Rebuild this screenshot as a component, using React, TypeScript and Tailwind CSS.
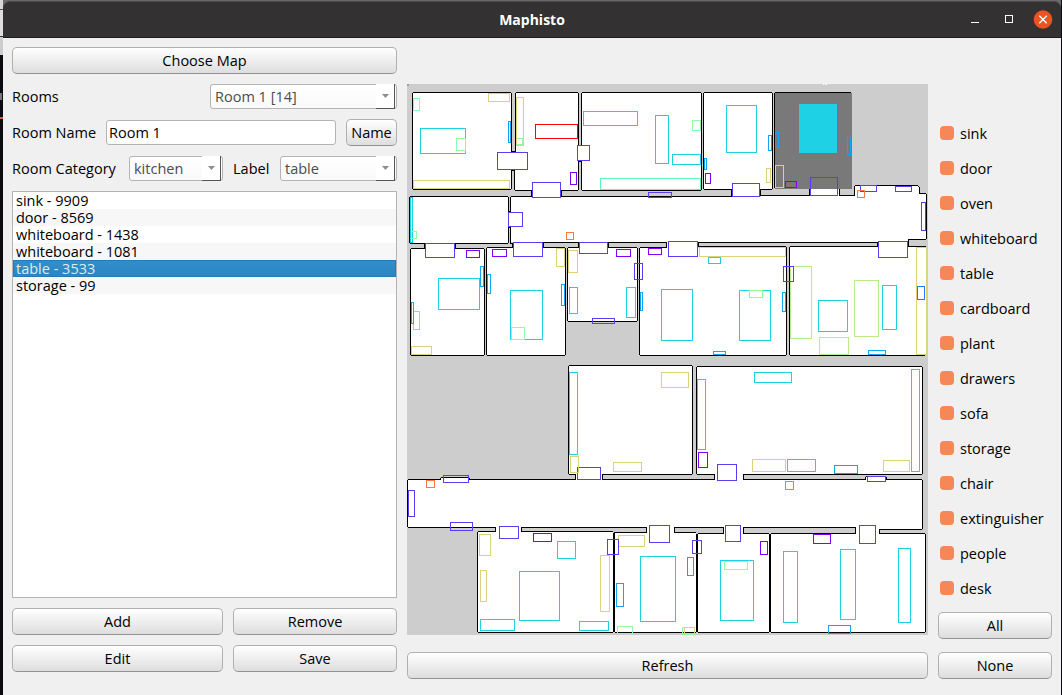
import React from "react";

type Box = [number, number, number, number];

const rooms: Box[] = [
  [413, 93, 98, 96], [511, 152, 5, 18], [516, 93, 62, 97], [515, 170, 10, 20], [532, 189, 29, 9], [577, 145, 13, 16],
  [582, 93, 119, 97], [704, 93, 68, 96], [732, 189, 28, 8], [810, 188, 29, 9],
  [410, 197, 98, 46], [508, 212, 3, 15], [511, 197, 397, 45], [908, 197, 18, 42], [761, 196, 165, 4], [855, 186, 64, 12], [918, 194, 8, 6],
  [425, 242, 30, 8], [513, 242, 30, 8], [579, 242, 29, 8], [667, 242, 31, 8], [878, 240, 30, 8],
  [411, 249, 73, 106], [487, 248, 78, 107], [568, 248, 69, 73], [640, 248, 146, 107], [790, 247, 137, 108],
  [569, 366, 123, 108], [697, 367, 225, 107], [576, 473, 26, 7], [715, 473, 28, 7],
  [408, 480, 514, 47], [441, 478, 28, 3], [866, 477, 20, 4], [879, 520, 43, 9], [856, 520, 23, 9],
  [496, 526, 25, 8], [647, 526, 27, 8], [724, 526, 19, 8], [856, 526, 23, 8],
  [478, 532, 135, 100], [615, 533, 81, 99], [698, 534, 71, 98], [771, 534, 154, 98],
];

// Horizontal walls: x, y, length
const hWalls: [number, number, number][] = [
  [413, 92, 98], [516, 92, 62], [582, 92, 119], [704, 92, 68], [775, 92, 76],
  [511, 151, 5], [511, 170, 4], [578, 161, 4], [413, 189, 98], [515, 190, 17], [561, 190, 17], [582, 190, 119], [704, 189, 28], [760, 189, 12],
  [410, 196, 98], [511, 196, 21], [561, 196, 171], [760, 195, 50], [839, 195, 16], [855, 185, 63], [919, 193, 7],
  [508, 211, 3], [508, 227, 3],
  [410, 243, 15], [455, 243, 53], [510, 243, 3], [411, 248, 14], [455, 248, 29], [487, 247, 26],
  [543, 242, 36], [543, 247, 22], [568, 247, 11], [608, 242, 59], [608, 247, 29], [640, 247, 27],
  [698, 242, 180], [698, 246, 88], [790, 246, 88], [908, 239, 18], [908, 246, 18],
  [411, 355, 73], [487, 355, 78], [568, 321, 69], [640, 355, 146], [790, 355, 135],
  [569, 365, 123], [697, 366, 225], [569, 474, 7], [602, 474, 90], [697, 474, 18], [743, 474, 179],
  [408, 479, 33], [469, 479, 107], [441, 477, 28], [602, 479, 113], [743, 479, 123], [866, 476, 20], [886, 479, 36],
  [408, 527, 88], [478, 531, 18], [521, 527, 126], [521, 531, 92], [614, 532, 33],
  [674, 527, 50], [674, 532, 22], [698, 533, 26], [743, 527, 113], [743, 533, 26], [771, 533, 85], [879, 529, 43], [879, 533, 46],
  [478, 632, 135], [615, 632, 81], [698, 632, 71], [771, 632, 154],
];

// Vertical walls: x, y, length
const vWalls: [number, number, number][] = [
  [412, 93, 96], [511, 93, 59], [515, 93, 59], [511, 170, 19], [514, 170, 20], [578, 93, 52], [581, 93, 52], [578, 161, 29], [581, 161, 29],
  [531, 190, 7], [561, 190, 7], [701, 93, 97], [703, 93, 96], [772, 93, 96], [774, 93, 95], [731, 189, 8], [760, 189, 7],
  [809, 189, 7], [839, 189, 7], [854, 186, 10], [918, 186, 1], [919, 187, 7], [926, 194, 45],
  [409, 197, 46], [508, 197, 15], [510, 197, 15], [508, 227, 16], [510, 227, 17], [512, 243, 5],
  [424, 243, 6], [455, 243, 6], [512, 243, 5], [543, 242, 6], [578, 242, 6], [608, 242, 6], [666, 242, 6], [698, 242, 5], [877, 242, 5], [908, 239, 8],
  [410, 249, 106], [484, 249, 106], [486, 248, 107], [565, 248, 107], [567, 248, 73], [637, 248, 73], [639, 248, 107], [786, 247, 108], [789, 247, 108],
  [568, 366, 108], [692, 366, 108], [696, 367, 107], [922, 367, 107], [575, 474, 6], [602, 474, 6], [714, 474, 6], [743, 474, 6],
  [440, 478, 2], [469, 478, 2], [865, 477, 3], [886, 477, 3], [407, 480, 47], [922, 480, 49],
  [495, 527, 5], [521, 527, 5], [646, 527, 6], [674, 527, 6], [723, 527, 7], [743, 527, 7], [855, 527, 7], [879, 529, 5],
  [477, 532, 100], [613, 533, 99], [614, 533, 99], [696, 534, 98], [697, 534, 98], [769, 534, 98], [770, 534, 98], [925, 534, 98],
];

const objects: { color: string; boxes: Box[] }[] = [
  { color: "#60f5b8", boxes: [[600, 178, 101, 12], [413, 311, 7, 19]] },
  { color: "#b8ec86", boxes: [[790, 266, 22, 73], [854, 280, 25, 57], [819, 337, 30, 18]] },
  {
    color: "#1fd0e0",
    boxes: [
      [420, 128, 46, 26], [583, 111, 55, 15], [655, 115, 14, 49], [672, 154, 29, 11], [726, 105, 31, 48], [410, 197, 3, 46],
      [438, 278, 42, 32], [510, 290, 33, 50], [569, 287, 9, 27], [626, 287, 10, 31], [661, 289, 32, 52], [708, 257, 13, 7],
      [739, 290, 32, 51], [818, 300, 30, 32], [882, 285, 15, 45], [569, 372, 9, 83], [697, 379, 9, 71], [754, 372, 38, 11],
      [787, 459, 29, 13], [911, 369, 9, 103], [557, 541, 19, 18], [519, 571, 41, 50], [640, 556, 36, 66], [480, 619, 35, 12],
      [579, 621, 30, 10], [720, 560, 34, 61], [783, 551, 15, 72], [840, 549, 16, 71], [898, 548, 13, 75],
    ],
  },
  {
    color: "#90faa4",
    boxes: [
      [413, 98, 7, 13], [456, 138, 10, 13], [516, 138, 7, 7], [692, 120, 9, 11], [411, 231, 6, 8], [511, 327, 14, 13],
      [749, 290, 14, 8], [617, 626, 16, 8], [724, 561, 24, 9], [682, 627, 13, 8],
    ],
  },
  {
    color: "#e0d077",
    boxes: [
      [488, 93, 22, 9], [413, 180, 97, 9], [516, 97, 8, 49], [766, 168, 5, 15], [775, 165, 9, 23], [556, 248, 9, 19],
      [568, 250, 10, 23], [411, 346, 21, 9], [699, 247, 87, 10], [916, 247, 11, 108], [661, 372, 28, 16],
      [613, 462, 29, 10], [752, 459, 34, 13], [883, 460, 27, 12], [479, 534, 12, 22], [480, 570, 7, 32], [600, 555, 10, 57],
      [618, 535, 27, 12], [684, 627, 11, 7],
    ],
  },
  {
    color: "#12a7ec",
    boxes: [
      [508, 121, 3, 22], [704, 158, 3, 12], [768, 135, 4, 16], [775, 132, 4, 16], [847, 137, 4, 18], [480, 266, 4, 21],
      [487, 274, 4, 20], [411, 302, 3, 22], [561, 284, 4, 22], [640, 292, 3, 19], [782, 292, 4, 20], [713, 351, 13, 4],
      [868, 350, 18, 5], [834, 465, 24, 9], [616, 583, 8, 24], [687, 557, 7, 19], [828, 625, 23, 9],
    ],
  },
  { color: "#2878f0", boxes: [[917, 286, 8, 14]] },
  { color: "#ff0000", boxes: [[535, 124, 43, 15]] },
  {
    color: "#8000ff",
    boxes: [
      [570, 172, 7, 13], [705, 173, 6, 11], [785, 181, 12, 7], [466, 250, 14, 8], [492, 249, 15, 8], [616, 249, 15, 8],
      [648, 248, 14, 7], [698, 452, 10, 16], [533, 533, 19, 9], [760, 541, 8, 14], [813, 534, 18, 10],
    ],
  },
  {
    color: "#5a3cf4",
    boxes: [
      [497, 152, 31, 18], [577, 145, 13, 16], [532, 182, 29, 16], [648, 192, 24, 6], [508, 212, 15, 15], [732, 183, 28, 14],
      [810, 177, 28, 19], [860, 185, 17, 7], [895, 186, 17, 6], [921, 202, 5, 29], [425, 243, 30, 15], [513, 242, 30, 15],
      [579, 242, 29, 12], [634, 263, 9, 17], [668, 241, 30, 16], [592, 318, 23, 6], [783, 266, 11, 16], [878, 241, 30, 17],
      [577, 467, 24, 13], [717, 464, 20, 17], [867, 476, 19, 6], [443, 475, 26, 8], [408, 490, 7, 27], [450, 522, 23, 9],
      [499, 526, 20, 13], [607, 539, 12, 16], [649, 525, 21, 18], [692, 540, 10, 14], [725, 525, 16, 17], [859, 525, 17, 19],
    ],
  },
  { color: "#e0d077", boxes: [[570, 456, 9, 17]] },
  { color: "#ff7842", boxes: [[857, 190, 8, 8], [566, 232, 8, 8], [785, 481, 9, 9], [426, 480, 9, 8]] },
];

function FloorMap() {
  return (
    <svg className="block h-[551px] w-[521px]" viewBox="407 84 521 551" shapeRendering="crispEdges">
      <rect x="407" y="84" width="521" height="551" fill="#cdcdcd" />
      <rect x="407" y="84" width="2" height="2" fill="#a0a0a0" />
      <path d="M823 84h1v1h-1zM825 84h2v1h-2z" fill="#fff" />
      {rooms.map(([x, y, w, h], i) => (
        <rect key={i} x={x} y={y} width={w} height={h} fill="#fff" />
      ))}
      {hWalls.map(([x, y, n], i) => (
        <rect key={i} x={x} y={y} width={n} height="1" fill="#000" />
      ))}
      {vWalls.map(([x, y, n], i) => (
        <rect key={i} x={x} y={y} width="1" height={n} fill="#000" />
      ))}
      <rect x="775" y="93" width="77" height="96" fill="#797979" />
      <rect x="799" y="104" width="38" height="49" fill="#1fd1e4" />
      {objects.map((group, g) => (
        <g key={g} fill="none" stroke={group.color}>
          {group.boxes.map(([x, y, w, h], i) => (
            <rect key={i} x={x + 0.5} y={y + 0.5} width={w - 1} height={h - 1} />
          ))}
        </g>
      ))}
    </svg>
  );
}

function Button({ children, className = "" }: { children: React.ReactNode; className?: string }) {
  return (
    <button
      className={
        "flex h-[27px] items-center justify-center rounded-[5px] border border-[#b0b0b0] border-b-[#929292] bg-linear-to-b from-white to-[#dedede] pt-px text-black " +
        className
      }
    >
      {children}
    </button>
  );
}

function Combo({ children, className = "" }: { children: React.ReactNode; className?: string }) {
  return (
    <div
      className={
        "flex h-[25px] items-stretch rounded-[3px] border border-[#b4b4b4] bg-linear-to-b from-white to-[#f9f9f9] text-[#4c4c4c] " +
        className
      }
    >
      <span className="flex flex-1 items-center pt-0.5 pl-1">{children}</span>
      <span className="-mt-px -mb-px mr-px flex w-[19px] items-center justify-center border-r border-b border-[#555] bg-white">
        <svg className="h-1 w-[7px]" viewBox="0 0 7 4">
          <path d="M0 0h7L3.5 4z" fill="#8e8c88" />
        </svg>
      </span>
    </div>
  );
}

const items = ["sink - 9909", "door - 8569", "whiteboard - 1438", "whiteboard - 1081", "table - 3533", "storage - 99"];

const labels = [
  "sink", "door", "oven", "whiteboard", "table", "cardboard", "plant",
  "drawers", "sofa", "storage", "chair", "extinguisher", "people", "desk",
];

export default function App() {
  return (
    <div className="flex h-[695px] w-[1062px] overflow-hidden bg-[#0b0c12] font-['Open_Sans','Noto_Sans',sans-serif] text-[14.5px] leading-none whitespace-nowrap text-black">
      <div className="flex w-[3px] flex-col">
        <div className="h-[9px] bg-[#d8d8d8]" />
        <div className="h-px bg-[#555]" />
        <div className="h-[26px] bg-[#dedede]" />
        <div className="h-px bg-[#333]" />
        <div className="h-[18px] bg-[#cccccc]" />
        <div className="mt-[38px] h-[7px] w-[2px] bg-[#777]" />
        <div className="mt-[17px] h-[2px] bg-[#c8614a]" />
      </div>
      <div className="flex w-[1058px] flex-col bg-[#686868]">
        <header className="mt-px flex h-[37px] items-center rounded-t-[7px] border-t border-b border-t-[#4b4a49] border-b-[#1f1e1e] bg-[#333131] text-white">
          <div className="w-[99px]" />
          <h1 className="flex-1 text-center text-[14px] font-bold">Maphisto</h1>
          <div className="flex w-[99px] items-center">
            <svg className="h-7 w-[99px]" viewBox="0 0 99 28">
              <path d="M9 16.5h8" stroke="#fff" />
              <rect x="43.5" y="9.5" width="7" height="7" fill="none" stroke="#fff" />
              <circle cx="81" cy="13.5" r="9.3" fill="#e95420" />
              <path d="M77.3 9.8l7.4 7.4M84.7 9.8l-7.4 7.4" stroke="#fff" strokeWidth="1.4" />
            </svg>
          </div>
        </header>

        <main className="flex flex-1 bg-[#f0f0f0] pt-[9px] pl-[9px]">
          <section className="flex w-[385px] flex-col">
            <Button>Choose Map</Button>
            <div className="mt-2.5 flex h-[25px] items-center justify-between">
              <span className="pt-0.5">Rooms</span>
              <Combo className="w-[187px]">Room 1 [14]</Combo>
            </div>
            <div className="mt-2.5 flex h-[27px] items-center">
              <span className="w-[94px] pt-0.5">Room Name</span>
              <div className="flex h-[25px] w-[230px] items-center rounded-[3px] border border-[#b4b4b4] bg-white pt-0.5 pl-0.5">Room 1</div>
              <Button className="ml-2.5 w-[51px]">Name</Button>
            </div>
            <div className="mt-2.5 flex h-[25px] items-center">
              <span className="w-[117px] pt-0.5">Room Category</span>
              <Combo className="w-[94px]">kitchen</Combo>
              <span className="ml-2.5 w-[47px] pt-0.5">Label</span>
              <Combo className="w-[117px]">table</Combo>
            </div>
            <ul className="mt-2.5 h-[407px] border border-[#b4b4b4] bg-white">
              {items.map((item, i) => (
                <li
                  key={item}
                  className={
                    "flex h-[17px] items-center pt-0.5 " +
                    (i === 4
                      ? "border border-[#2a7ab2] bg-linear-to-b from-[#308fcb] to-[#2c86c0] pl-0.5 text-[#dfeaf3]"
                      : i % 2
                        ? "bg-[#f7f7f7] pl-[3px]"
                        : "pl-[3px]")
                  }
                >
                  {item}
                </li>
              ))}
            </ul>
            <div className="mt-2.5 grid grid-cols-[211px_164px] gap-2.5">
              <Button>Add</Button>
              <Button>Remove</Button>
              <Button>Edit</Button>
              <Button>Save</Button>
            </div>
          </section>

          <section className="ml-2.5 w-[521px] pt-[37px]">
            <FloorMap />
            <Button className="mt-[17px] w-full">Refresh</Button>
          </section>

          <section className="ml-2.5 w-[114px] pt-[69px]">
            <ul>
              {labels.map((label) => (
                <li key={label} className="flex h-[35px] items-center pl-0.5">
                  <span className="mr-1.5 -mt-0.5 size-3.5 rounded-[4px] bg-[#f68756]" />
                  <span className="pt-0.5">{label}</span>
                </li>
              ))}
            </ul>
            <Button className="mt-[6px] w-full">All</Button>
            <Button className="mt-[13px] w-full">None</Button>
          </section>
        </main>
      </div>
    </div>
  );
}
